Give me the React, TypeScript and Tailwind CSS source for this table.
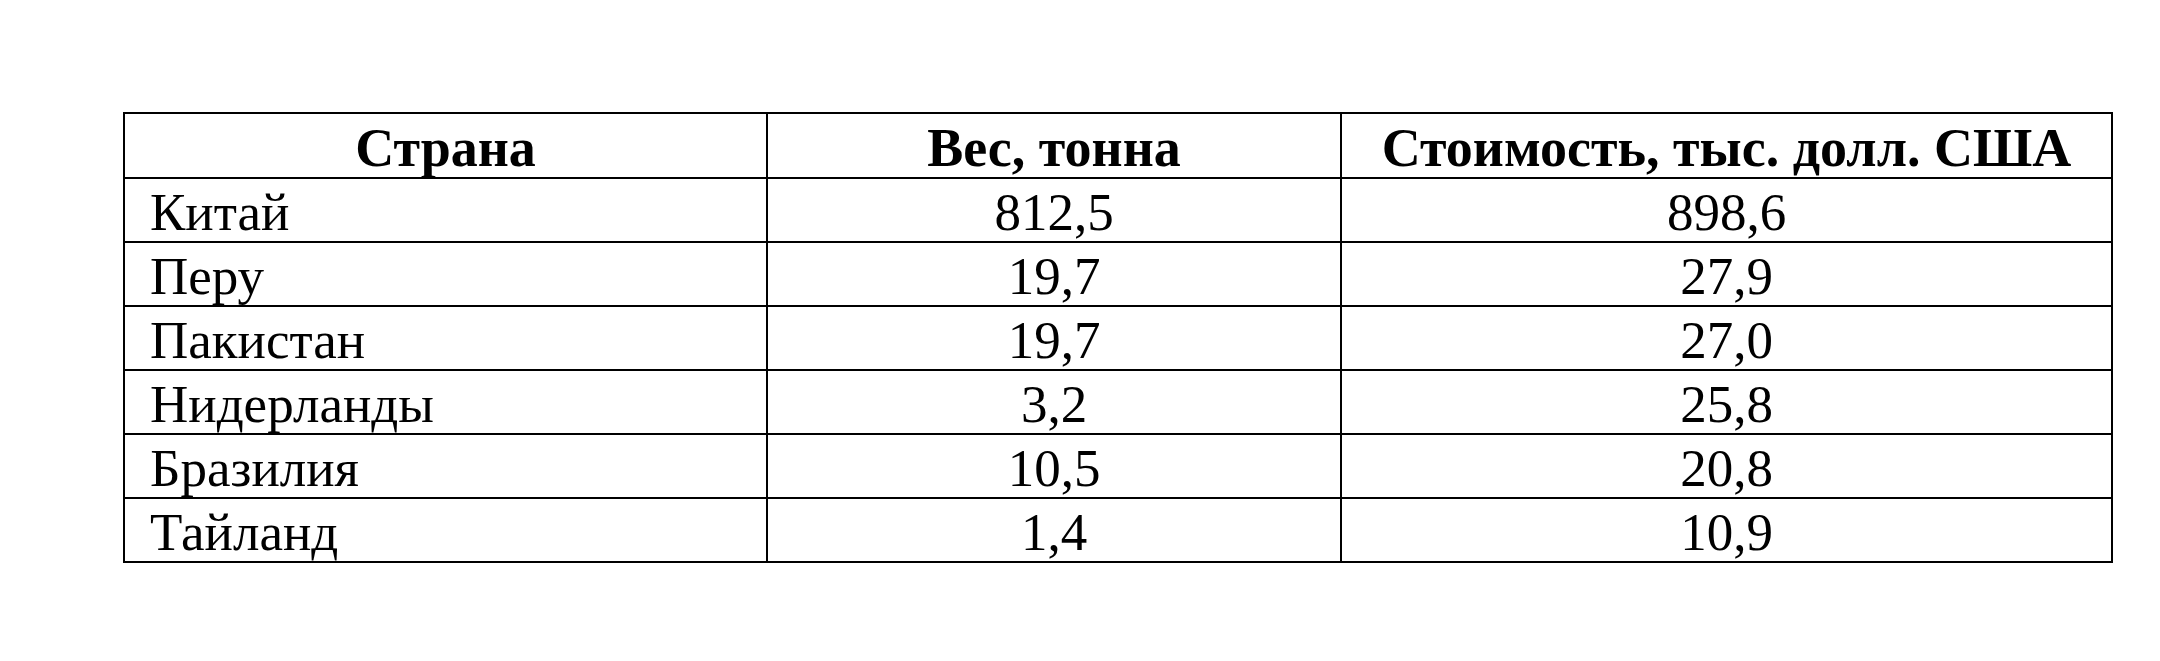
const rows = [
  { country: "Китай", weight: "812,5", cost: "898,6" },
  { country: "Перу", weight: "19,7", cost: "27,9" },
  { country: "Пакистан", weight: "19,7", cost: "27,0" },
  { country: "Нидерланды", weight: "3,2", cost: "25,8" },
  { country: "Бразилия", weight: "10,5", cost: "20,8" },
  { country: "Тайланд", weight: "1,4", cost: "10,9" },
];

export default function App() {
  return (
    <div className="w-[2160px] h-[661px] bg-white pt-[112px] pl-[123px] font-['Liberation_Serif','Times_New_Roman',serif] text-black">
      <table className="table-fixed border-collapse w-[1988px] leading-[58px]">
        <colgroup>
          <col className="w-[643px]" />
          <col className="w-[574px]" />
          <col className="w-[771px]" />
        </colgroup>
        <thead>
          <tr className="h-[65px] text-[54px]">
            <th className="border-2 border-black font-bold text-center p-0 pt-[4px]">Страна</th>
            <th className="border-2 border-black font-bold text-center p-0 pt-[4px]">Вес, тонна</th>
            <th className="border-2 border-black font-bold text-center p-0 pt-[4px]">Стоимость, тыс. долл. США</th>
          </tr>
        </thead>
        <tbody className="text-[53px]">
          {rows.map((r) => (
            <tr key={r.country} className="h-[64px]">
              <td className="border-2 border-black text-left pl-[25px] pt-[4px]">{r.country}</td>
              <td className="border-2 border-black text-center pt-[4px]">{r.weight}</td>
              <td className="border-2 border-black text-center pt-[4px]">{r.cost}</td>
            </tr>
          ))}
        </tbody>
      </table>
    </div>
  );
}
